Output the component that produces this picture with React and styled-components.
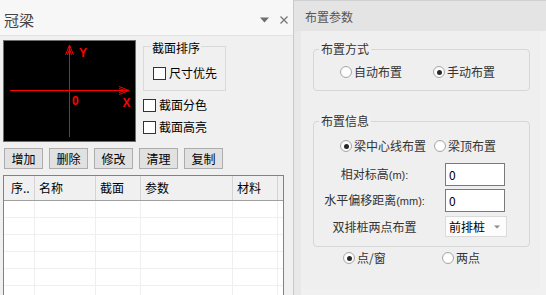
import React from "react";
import styled, { createGlobalStyle } from "styled-components";

const GlobalStyle = createGlobalStyle`
  html, body { margin: 0; padding: 0; background: #f0f0f0; }
  body {
    font-family: "Noto Sans CJK SC", "Microsoft YaHei", sans-serif;
    font-size: 12px;
    line-height: 16px;
    color: #000;
  }
  * { box-sizing: border-box; }
`;

const Window = styled.div`
  display: flex;
  width: 546px;
  height: 295px;
  overflow: hidden;
`;

/* ---------- left pane ---------- */
const LeftPane = styled.div`
  width: 294px;
  flex: none;
  display: flex;
  flex-direction: column;
  background: #f0f0f0;
  border-right: 1px solid #c9c9c9;
`;

const PaneTitle = styled.div`
  height: 36px;
  flex: none;
  display: flex;
  align-items: center;
  padding: 4px 5px 0 4px;
  background: #f7f7f7;
  border-bottom: 1px solid #e2e2e2;
`;

const TitleText = styled.span`
  font-size: 15px;
  line-height: 18px;
  color: #444;
`;

const TitleIcons = styled.div`
  margin-left: auto;
  display: flex;
  align-items: center;
  gap: 11px;
`;

const LeftBody = styled.div`
  flex: 1;
  display: flex;
  flex-direction: column;
  padding: 4px 0 0 3px;
  min-height: 0;
`;

const TopRow = styled.div`
  display: flex;
  gap: 7px;
  height: 102px;
  flex: none;
`;

const Canvas = styled.div`
  width: 133px;
  height: 102px;
  background: #000;
  border: 1px solid #6d6d6d;
  display: flex;
`;

const SideCol = styled.div`
  display: flex;
  flex-direction: column;
  padding-top: 6px;
  gap: 6px;
`;

const GroupBox = styled.div`
  position: relative;
  border: 1px solid ${(p) => p.$border || "#d9d9d9"};
  border-radius: ${(p) => p.$radius || 0}px;
  width: ${(p) => (p.$width ? p.$width + "px" : "auto")};
  height: ${(p) => p.$height}px;
  padding: ${(p) => p.$pad};
  margin-top: ${(p) => p.$mt || 0}px;
  flex: none;
`;

const Legend = styled.span`
  position: absolute;
  top: ${(p) => p.$top}px;
  left: ${(p) => p.$left}px;
  padding: 0 ${(p) => p.$px || 1}px;
  background: #f0f0f0;
  line-height: 16px;
  color: ${(p) => p.$color || "#000"};
`;

const CheckRow = styled.label`
  display: flex;
  align-items: center;
  height: 16px;
  gap: 3px;
`;

const CheckBox = styled.span`
  width: 13px;
  height: 13px;
  flex: none;
  background: #fff;
  border: 1px solid #333;
`;

const ButtonRow = styled.div`
  display: flex;
  gap: 6px;
  margin-top: 6px;
  padding-left: 1px;
  flex: none;
`;

const Button = styled.button`
  width: 39px;
  height: 21px;
  padding: 0;
  margin: 0;
  background: #e1e1e1;
  border: 1px solid #adadad;
  font-family: inherit;
  font-size: 12px;
  line-height: 16px;
  color: #000;
`;

const Table = styled.div`
  margin-top: 6px;
  width: 281px;
  flex: 1;
  background: #fff;
  border: 1px solid #828282;
  border-bottom: none;
  display: flex;
  flex-direction: column;
  overflow: hidden;
`;

const HeaderRow = styled.div`
  display: flex;
  height: 25px;
  flex: none;
  background: #f0f0f0;
  border-bottom: 1px solid #a0a0a0;
`;

const HeaderCell = styled.div`
  width: ${(p) => p.$w}px;
  flex: none;
  display: flex;
  align-items: center;
  padding-left: ${(p) => p.$pl || 4}px;
  border-right: 1px solid ${(p) => (p.$last ? "transparent" : "#d4d4d4")};
  white-space: nowrap;
  overflow: hidden;
`;

const BodyRow = styled.div`
  display: flex;
  height: 17px;
  flex: none;
  border-bottom: 1px solid #efefef;
`;

const BodyCell = styled.div`
  width: ${(p) => p.$w}px;
  flex: none;
  border-right: 1px solid ${(p) => (p.$last ? "transparent" : "#efefef")};
`;

/* ---------- right pane ---------- */
const RightPane = styled.div`
  flex: 1;
  display: flex;
  flex-direction: column;
  background: #ebebeb;
`;

const RightHeader = styled.div`
  height: 31px;
  flex: none;
  display: flex;
  align-items: center;
  padding: 1px 0 0 11px;
  background: #e4e4e4;
  border-top: 1px solid #d0d0d0;
  color: #555;
`;

const RightBody = styled.div`
  flex: 1;
  padding: 0 6px 6px 7px;
  display: flex;
  background: linear-gradient(to right, #e8e8e8 0 7px, #f1f1f1 7px);
`;

const Content = styled.div`
  flex: 1;
  background: #efefef;
  padding: 0 10px 0 12px;
  display: flex;
  flex-direction: column;
  color: #333;
`;

const RadioRow = styled.div`
  display: flex;
  height: 16px;
  padding-left: ${(p) => p.$pl}px;
  margin-top: ${(p) => p.$mt || 0}px;
`;

const RadioItem = styled.label`
  display: flex;
  align-items: center;
  gap: 2px;
  width: ${(p) => p.$w}px;
  flex: none;
  white-space: nowrap;
`;

const RadioCircle = styled.span`
  width: 12px;
  height: 12px;
  flex: none;
  border-radius: 50%;
  border: 1px solid #a9a9a9;
  background: radial-gradient(circle at 50% 50%, #fff 0 55%, #f2f2f2 75%);
  display: flex;
  align-items: center;
  justify-content: center;
  &::after {
    content: "";
    display: ${(p) => (p.$on ? "block" : "none")};
    width: 5px;
    height: 5px;
    border-radius: 50%;
    background: #2a2a2a;
  }
`;

const FieldRow = styled.div`
  display: flex;
  align-items: center;
  margin-top: ${(p) => p.$mt}px;
`;

const FieldLabel = styled.span`
  width: 121px;
  flex: none;
  text-align: center;
  white-space: nowrap;
  margin-right: 10px;
`;

const Unit = styled.span`
  font-family: "Liberation Sans", Arial, sans-serif;
  font-size: 11px;
`;

const TextInput = styled.input`
  width: 60px;
  height: 23px;
  margin: 0;
  padding: 0 0 0 3px;
  border: 1px solid #7a7a7a;
  background: #fff;
  font-family: inherit;
  font-size: 12px;
  color: #000;
  outline: none;
`;

const Select = styled.div`
  width: 62px;
  height: 21px;
  display: flex;
  align-items: center;
  padding: 0 6px 0 3px;
  border: 1px solid #dadada;
  background: #fcfcfc;
  color: #000;
`;

const SelectArrow = styled.svg`
  margin-left: auto;
  flex: none;
`;

const cols = [
  { w: 31, t: "序..", pl: 7 },
  { w: 61, t: "名称" },
  { w: 45, t: "截面" },
  { w: 92, t: "参数" },
  { w: 45, t: "材料" },
  { w: 5, t: "", last: true },
];

function Radio({ on, w, children }) {
  return (
    <RadioItem $w={w}>
      <RadioCircle $on={on} />
      <span>{children}</span>
    </RadioItem>
  );
}

function Check({ children }) {
  return (
    <CheckRow>
      <CheckBox />
      <span>{children}</span>
    </CheckRow>
  );
}

export default function App() {
  return (
    <>
      <GlobalStyle />
      <Window>
        <LeftPane>
          <PaneTitle>
            <TitleText>冠梁</TitleText>
            <TitleIcons>
              <svg width="9" height="6" viewBox="0 0 9 6">
                <path d="M0 0.5 H9 L4.5 5.5 Z" fill="#6e6e6e" />
              </svg>
              <svg width="8" height="8" viewBox="0 0 8 8">
                <path d="M0.5 0.5 L7.5 7.5 M7.5 0.5 L0.5 7.5" stroke="#777" strokeWidth="1.3" />
              </svg>
            </TitleIcons>
          </PaneTitle>
          <LeftBody>
            <TopRow>
              <Canvas>
                <svg width="131" height="100" viewBox="0 0 131 100">
                  <g stroke="#ff0000" strokeWidth="1" fill="none" shapeRendering="crispEdges">
                    <line x1="65.5" y1="4" x2="65.5" y2="96" />
                    <line x1="6" y1="49.5" x2="125" y2="49.5" />
                  </g>
                  <g stroke="#ff0000" strokeWidth="1" fill="none">
                    <polyline points="61.5,14 65.5,4 69.5,14" />
                    <polyline points="63.5,14 65.5,8 67.5,14" />
                    <polyline points="115,45.5 125,49.5 115,53.5" />
                    <polyline points="115,47.5 121,49.5 115,51.5" />
                  </g>
                  <text x="75" y="16" fill="#ff0000" fontFamily="Liberation Sans, sans-serif" fontWeight="bold" fontSize="12">Y</text>
                  <text x="68" y="64" fill="#ff0000" fontFamily="Liberation Sans, sans-serif" fontWeight="bold" fontSize="12">0</text>
                  <text x="118.5" y="66" fill="#ff0000" fontFamily="Liberation Sans, sans-serif" fontWeight="bold" fontSize="12">X</text>
                </svg>
              </Canvas>
              <SideCol>
                <GroupBox $width={83} $height={45} $pad="18px 0 0 9px">
                  <Legend $top={-7} $left={7}>截面排序</Legend>
                  <Check>尺寸优先</Check>
                </GroupBox>
                <Check>截面分色</Check>
                <Check>截面高亮</Check>
              </SideCol>
            </TopRow>
            <ButtonRow>
              <Button>增加</Button>
              <Button>删除</Button>
              <Button>修改</Button>
              <Button>清理</Button>
              <Button>复制</Button>
            </ButtonRow>
            <Table>
              <HeaderRow>
                {cols.map((c, i) => (
                  <HeaderCell key={i} $w={c.w} $pl={c.pl} $last={c.last}>
                    {c.t}
                  </HeaderCell>
                ))}
              </HeaderRow>
              {[0, 1, 2, 3, 4, 5].map((r) => (
                <BodyRow key={r}>
                  {cols.map((c, i) => (
                    <BodyCell key={i} $w={c.w} $last={c.last} />
                  ))}
                </BodyRow>
              ))}
            </Table>
          </LeftBody>
        </LeftPane>

        <RightPane>
          <RightHeader>布置参数</RightHeader>
          <RightBody>
            <Content>
              <GroupBox $mt={18} $height={42} $radius={4} $border="#d6d6d6" $pad="14px 0 0 26px">
                <Legend $top={-9} $left={5} $px={2} $color="#333">布置方式</Legend>
                <RadioRow $pl={0}>
                  <Radio w={93}>自动布置</Radio>
                  <Radio w={90} on>手动布置</Radio>
                </RadioRow>
              </GroupBox>

              <GroupBox $mt={30} $height={126} $radius={4} $border="#d6d6d6" $pad="16px 0 0 0">
                <Legend $top={-9} $left={5} $px={2} $color="#333">布置信息</Legend>
                <RadioRow $pl={26}>
                  <Radio w={94} on>梁中心线布置</Radio>
                  <Radio w={80}>梁顶布置</Radio>
                </RadioRow>
                <FieldRow $mt={9}>
                  <FieldLabel>相对标高<Unit>(m):</Unit></FieldLabel>
                  <TextInput readOnly value="0" />
                </FieldRow>
                <FieldRow $mt={3}>
                  <FieldLabel>水平偏移距离<Unit>(mm):</Unit></FieldLabel>
                  <TextInput readOnly value="0" />
                </FieldRow>
                <FieldRow $mt={4}>
                  <FieldLabel>双排桩两点布置</FieldLabel>
                  <Select>
                    <span>前排桩</span>
                    <SelectArrow width="6" height="4" viewBox="0 0 6 4">
                      <path d="M0 0.5 H6 L3 3.5 Z" fill="#8a8a8a" />
                    </SelectArrow>
                  </Select>
                </FieldRow>
              </GroupBox>

              <RadioRow $pl={30} $mt={3}>
                <Radio w={99} on>点/窗</Radio>
                <Radio w={60}>两点</Radio>
              </RadioRow>
            </Content>
          </RightBody>
        </RightPane>
      </Window>
    </>
  );
}
